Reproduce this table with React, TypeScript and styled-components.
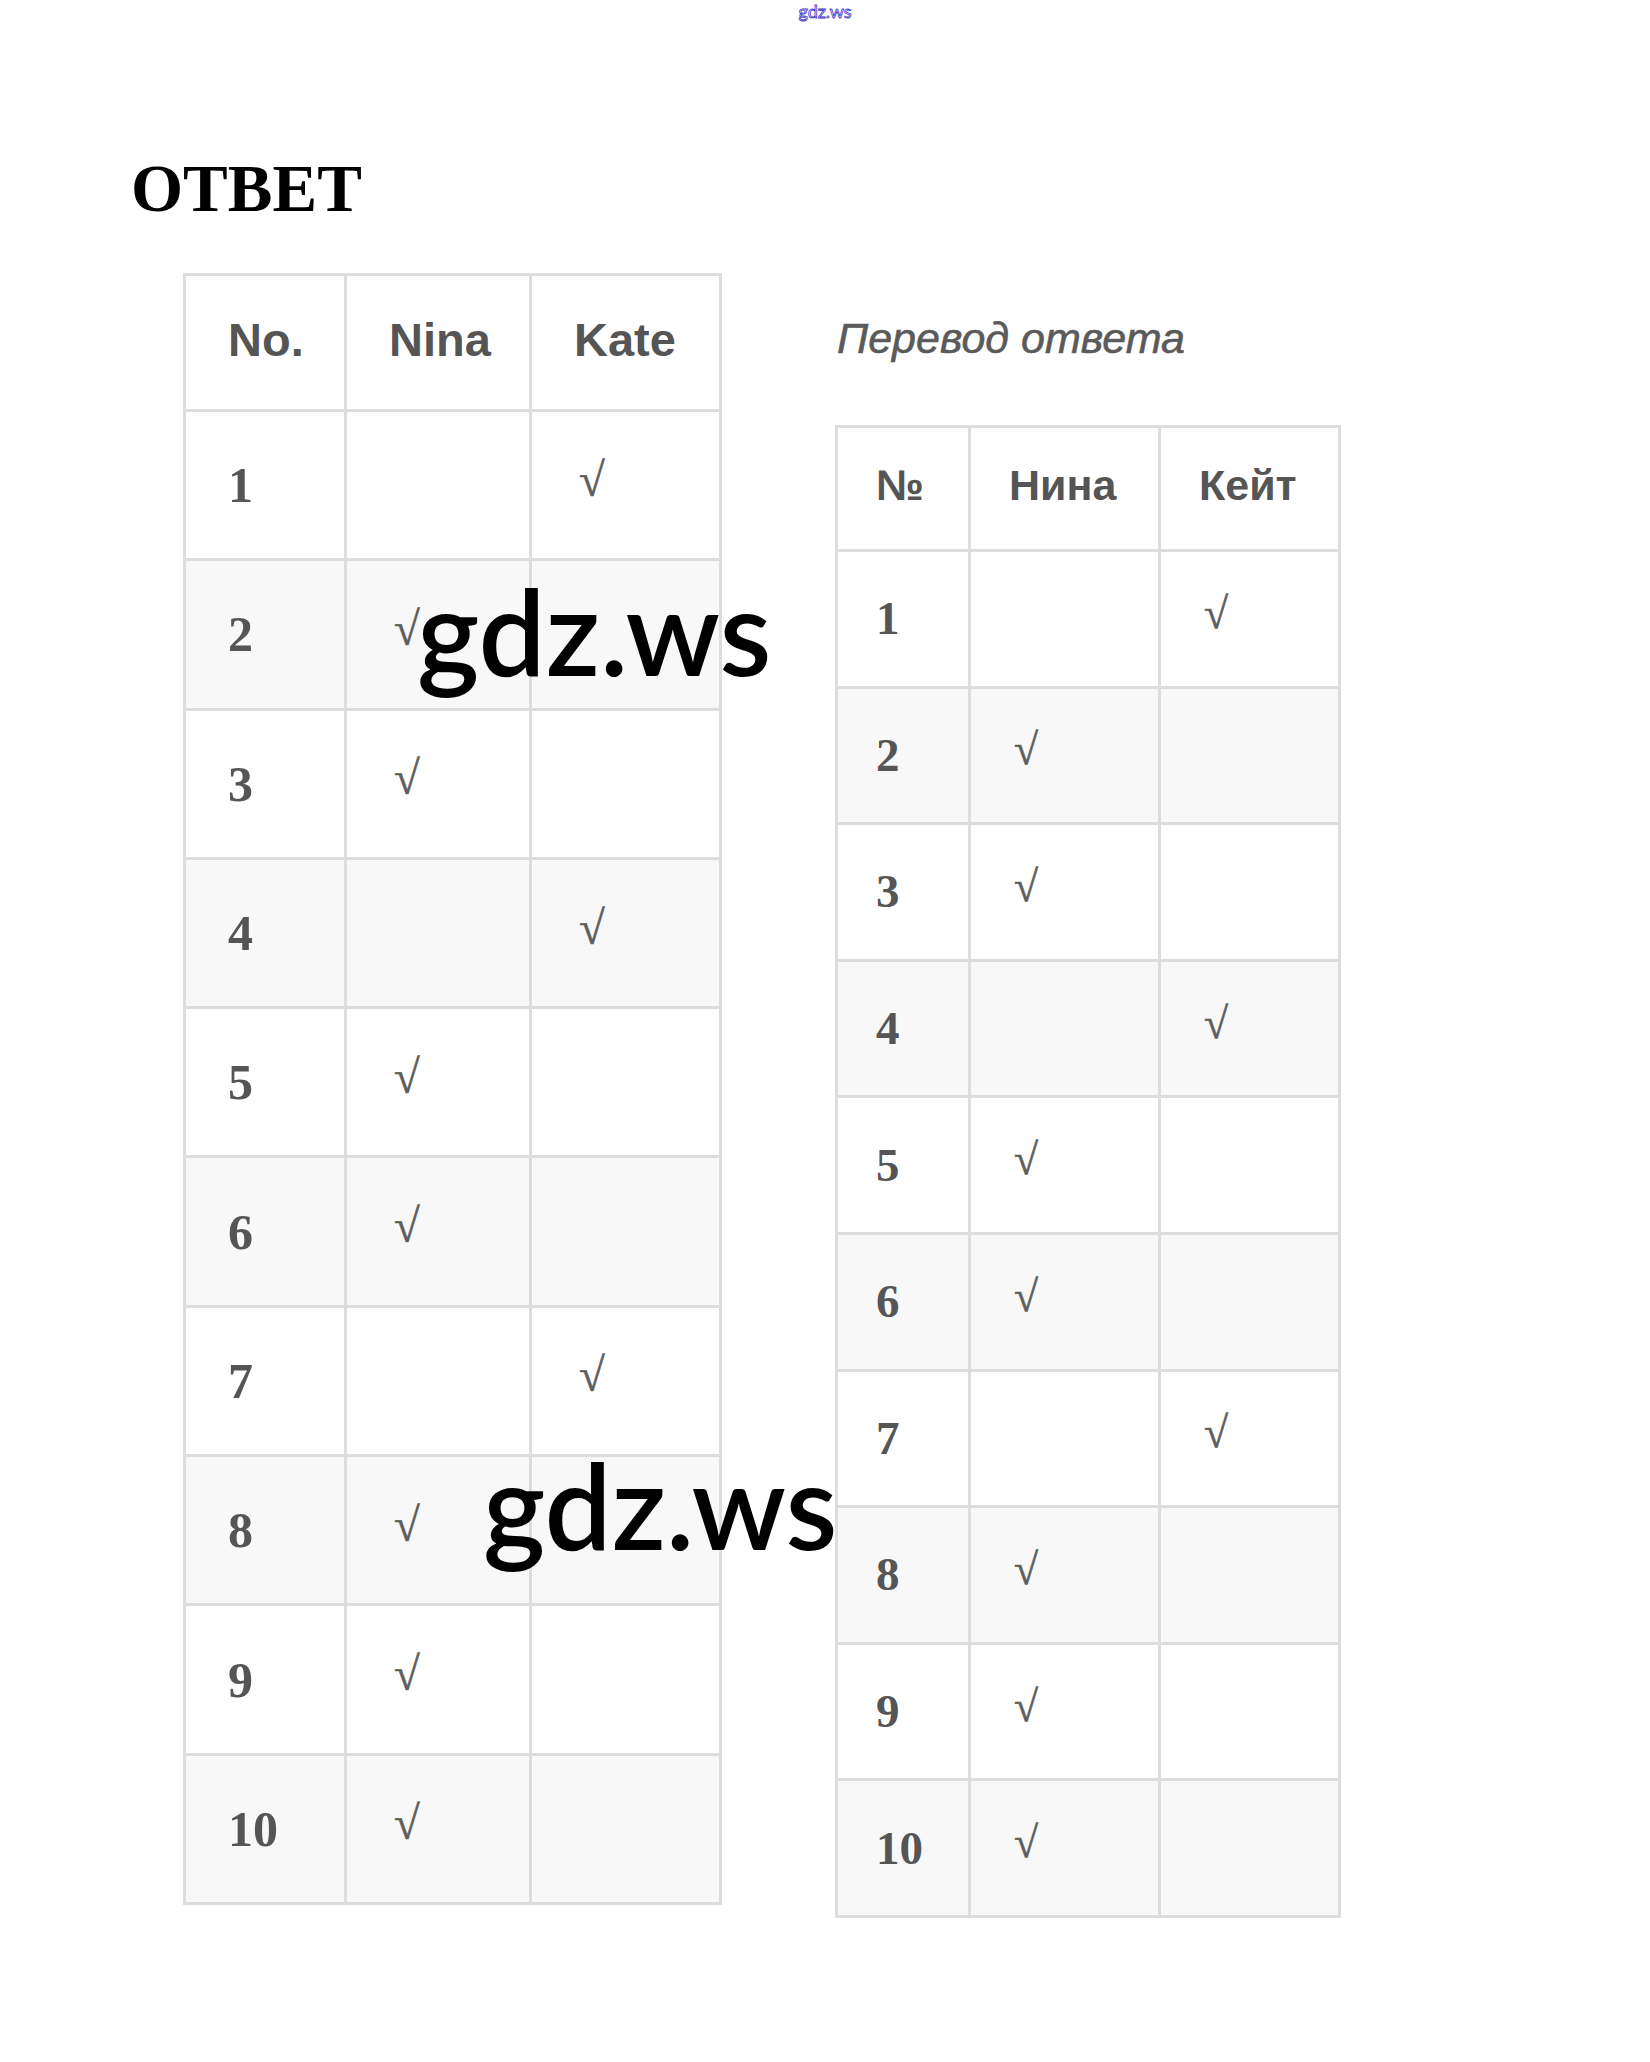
import React from "react";
import styled, { createGlobalStyle } from "styled-components";

const GlobalStyle = createGlobalStyle`
  html, body {
    margin: 0;
    padding: 0;
    background: #ffffff;
  }
  body {
    font-family: "Liberation Sans", Arial, sans-serif;
  }
`;

const Page = styled.div`
  position: relative;
  width: 1650px;
  min-height: 2062px;
  padding-top: 2px;
  box-sizing: border-box;
  background: #ffffff;
`;

const TopMark = styled.div`
  height: 18px;
  text-align: center;
  font-family: Lato, "Liberation Sans", sans-serif;
  font-size: 18px;
  line-height: 18px;
  color: #ffffff;
  -webkit-text-stroke: 0.8px #3434cc;
`;

const Title = styled.h1`
  margin: 134px 0 0 131px;
  font-family: "Liberation Serif", "Times New Roman", serif;
  font-weight: 700;
  font-size: 67px;
  line-height: 68px;
  color: #000000;
`;

const Columns = styled.div`
  display: flex;
  align-items: flex-start;
  gap: 113px;
  margin-top: 51px;
  padding-left: 183px;
`;

const RightColumn = styled.div`
  display: flex;
  flex-direction: column;
  margin-top: 43px;
`;

const Caption = styled.div`
  margin: 0 0 65px 2px;
  font-family: "Liberation Sans", Arial, sans-serif;
  font-style: italic;
  font-size: 43px;
  line-height: 44px;
  color: #5a5a5a;
  -webkit-text-stroke: 0.6px #5a5a5a;
`;

const Grid = styled.div<{ $cols: string; $rows: string }>`
  display: grid;
  grid-template-columns: ${(p) => p.$cols};
  grid-template-rows: ${(p) => p.$rows};
  gap: 3px;
  padding: 3px;
  width: max-content;
  background: #dddddd;
`;

type Size = "large" | "small";

const Cell = styled.div<{ $shade: boolean; $size: Size }>`
  display: flex;
  align-items: center;
  padding-left: ${(p) => (p.$size === "large" ? "42px" : "38px")};
  background: ${(p) => (p.$shade ? "#f8f8f8" : "#ffffff")};
  color: #555555;
`;

const HeadText = styled.span<{ $size: Size }>`
  font-family: "Liberation Sans", Arial, sans-serif;
  font-weight: 700;
  font-size: ${(p) => (p.$size === "large" ? "47px" : "43px")};
  line-height: 1;
  margin-top: -6px;
`;

const Num = styled.span<{ $size: Size }>`
  font-family: "Liberation Serif", "Times New Roman", serif;
  font-weight: 700;
  font-size: ${(p) => (p.$size === "large" ? "50px" : "47px")};
  line-height: 1;
  color: #555555;
`;

const Check = styled.span<{ $size: Size }>`
  margin-left: 5px;
  font-family: "Liberation Serif", "DejaVu Serif", serif;
  font-size: ${(p) => (p.$size === "large" ? "47px" : "44px")};
  line-height: 1;
  color: #5e5e5e;
  -webkit-text-stroke: 0.5px #5e5e5e;
  margin-top: -10px;
`;

const Watermark = styled.div<{ $left: number; $top: number }>`
  position: absolute;
  left: ${(p) => p.$left}px;
  top: ${(p) => p.$top}px;
  font-family: Lato, "Liberation Sans", sans-serif;
  font-weight: 600;
  font-size: 119px;
  line-height: 119px;
  color: #000000;
  white-space: nowrap;
  pointer-events: none;
`;

// which column holds the check for rows 1..10: 1 = first person, 2 = second person
const answers = [2, 1, 1, 2, 1, 1, 2, 1, 1, 1];

type TableProps = {
  headers: [string, string, string];
  size: Size;
  cols: string;
  rows: string;
};

function AnswerTable({ headers, size, cols, rows }: TableProps) {
  return (
    <Grid $cols={cols} $rows={rows}>
      {headers.map((h) => (
        <Cell key={h} $shade={false} $size={size}>
          <HeadText $size={size}>{h}</HeadText>
        </Cell>
      ))}
      {answers.map((who, i) => {
        const shade = i % 2 === 1;
        return (
          <React.Fragment key={i}>
            <Cell $shade={shade} $size={size}>
              <Num $size={size}>{i + 1}</Num>
            </Cell>
            <Cell $shade={shade} $size={size}>
              {who === 1 && <Check $size={size}>√</Check>}
            </Cell>
            <Cell $shade={shade} $size={size}>
              {who === 2 && <Check $size={size}>√</Check>}
            </Cell>
          </React.Fragment>
        );
      })}
    </Grid>
  );
}

export default function App() {
  return (
    <>
      <GlobalStyle />
      <Page>
        <TopMark>gdz.ws</TopMark>
        <Title>ОТВЕТ</Title>
        <Columns>
          <AnswerTable
            headers={["No.", "Nina", "Kate"]}
            size="large"
            cols="158px 182px 187px"
            rows="133px repeat(10, 146.3px)"
          />
          <RightColumn>
            <Caption>Перевод ответа</Caption>
            <AnswerTable
              headers={["№", "Нина", "Кейт"]}
              size="small"
              cols="130px 187px 177px"
              rows="121px repeat(10, 133.6px)"
            />
          </RightColumn>
        </Columns>
        <Watermark $left={417} $top={571}>gdz.ws</Watermark>
        <Watermark $left={483} $top={1445}>gdz.ws</Watermark>
      </Page>
    </>
  );
}
